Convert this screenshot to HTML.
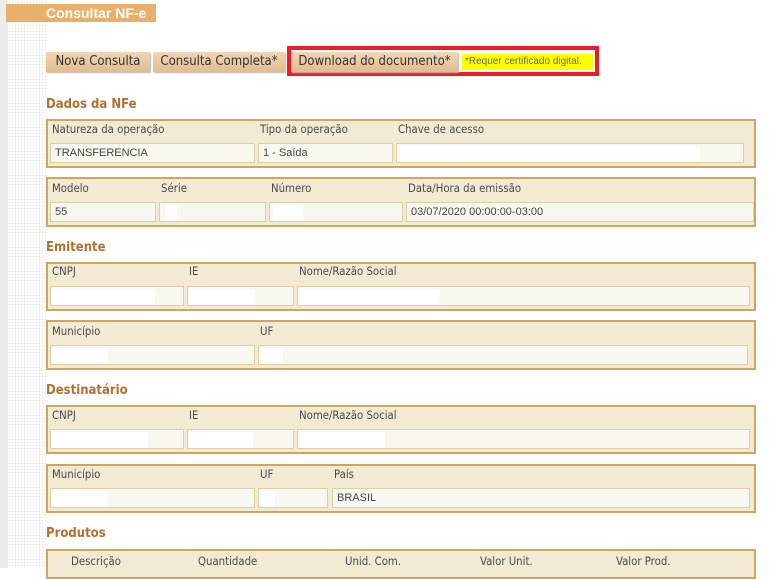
<!DOCTYPE html>
<html><head><meta charset="utf-8"><style>
*{margin:0;padding:0;box-sizing:border-box}
body{width:770px;height:568px;overflow:hidden;background:#fff;font-family:"DejaVu Sans Condensed","Liberation Sans",sans-serif;position:relative}
.strip{position:absolute;left:0;top:0;width:8px;height:568px;background:#ececec}
.dots{position:absolute;left:8px;top:0;width:40px;height:568px;background-image:radial-gradient(#ececec 1px,transparent 1px);background-size:3px 3px;opacity:.9}
.a{position:absolute}
.title{left:6px;top:4px;width:150px;height:18px;background:#e8b06a;color:#fff;font:bold 14px "Liberation Sans",sans-serif;padding-left:40px;line-height:18px}
.btn{top:52px;height:20px;background:linear-gradient(#f0d7b8,#e4bb8c);color:#333;font-size:13px;line-height:20px;text-align:center;box-shadow:1px 1px 1px #bbb;white-space:nowrap}
.red{left:287px;top:46px;width:312px;height:30px;border:4px solid #ee1c24;background:#fff}
.note{left:462px;top:54px;width:131px;height:16px;background:#ffff00;color:#666;font:10px "Liberation Sans",sans-serif;line-height:16px;padding-left:3px}
.h{left:46px;color:#b0702f;font-weight:bold;font-size:13px}
.box{left:46px;width:710px;background:#f2ead3;border:2px solid #cfa560}
.lb{font-size:11.3px;color:#4a4a4a}
.in{height:20px;background:#f9f8f0;border:1px solid #ddd0a8;font:11px "Liberation Sans",sans-serif;color:#444;line-height:18px;padding-left:4px}
.w{position:absolute;background:#fff;height:16px;top:2px}
</style></head><body>
<div class="strip"></div><div class="dots"></div>
<div class="a title">Consultar NF-e</div>
<div class="a btn" style="left:46px;width:104px">Nova Consulta</div>
<div class="a btn" style="left:153px;width:132px">Consulta Completa*</div>
<div class="a red"></div>
<div class="a btn" style="left:291px;width:167px">Download do documento*</div>
<div class="a note">*Requer certificado digital.</div>

<div class="a h" style="top:97px">Dados da NFe</div>
<div class="a box" style="top:119px;height:49px"></div>
<div class="a lb" style="left:52px;top:123px">Natureza da operação</div>
<div class="a lb" style="left:260px;top:123px">Tipo da operação</div>
<div class="a lb" style="left:398px;top:123px">Chave de acesso</div>
<div class="a in" style="left:50px;top:143px;width:205px">TRANSFERENCIA</div>
<div class="a in" style="left:258px;top:143px;width:135px">1 - Saída</div>
<div class="a in" style="left:396px;top:143px;width:348px"><div class="w" style="left:3px;width:300px"></div></div>

<div class="a box" style="top:177px;height:50px"></div>
<div class="a lb" style="left:52px;top:182px">Modelo</div>
<div class="a lb" style="left:161px;top:182px">Série</div>
<div class="a lb" style="left:271px;top:182px">Número</div>
<div class="a lb" style="left:408px;top:182px">Data/Hora da emissão</div>
<div class="a in" style="left:50px;top:202px;width:106px">55</div>
<div class="a in" style="left:159px;top:202px;width:107px"><div class="w" style="left:5px;width:12px"></div></div>
<div class="a in" style="left:269px;top:202px;width:134px"><div class="w" style="left:3px;width:30px"></div></div>
<div class="a in" style="left:406px;top:202px;width:348px">03/07/2020 00:00:00-03:00</div>

<div class="a h" style="top:240px">Emitente</div>
<div class="a box" style="top:262px;height:49px"></div>
<div class="a lb" style="left:52px;top:265px">CNPJ</div>
<div class="a lb" style="left:189px;top:265px">IE</div>
<div class="a lb" style="left:299px;top:265px">Nome/Razão Social</div>
<div class="a in" style="left:50px;top:286px;width:134px"><div class="w" style="left:1px;width:103px"></div></div>
<div class="a in" style="left:187px;top:286px;width:107px"><div class="w" style="left:1px;width:66px"></div></div>
<div class="a in" style="left:297px;top:286px;width:453px"><div class="w" style="left:1px;width:140px"></div></div>

<div class="a box" style="top:320px;height:50px"></div>
<div class="a lb" style="left:52px;top:325px">Município</div>
<div class="a lb" style="left:260px;top:325px">UF</div>
<div class="a in" style="left:50px;top:345px;width:205px"><div class="w" style="left:1px;width:56px"></div></div>
<div class="a in" style="left:258px;top:345px;width:490px"><div class="w" style="left:2px;width:22px"></div></div>

<div class="a h" style="top:383px">Destinatário</div>
<div class="a box" style="top:405px;height:49px"></div>
<div class="a lb" style="left:52px;top:409px">CNPJ</div>
<div class="a lb" style="left:189px;top:409px">IE</div>
<div class="a lb" style="left:299px;top:409px">Nome/Razão Social</div>
<div class="a in" style="left:50px;top:429px;width:134px"><div class="w" style="left:1px;width:96px"></div></div>
<div class="a in" style="left:187px;top:429px;width:107px"><div class="w" style="left:1px;width:64px"></div></div>
<div class="a in" style="left:297px;top:429px;width:453px"><div class="w" style="left:1px;width:86px"></div></div>

<div class="a box" style="top:464px;height:49px"></div>
<div class="a lb" style="left:52px;top:468px">Município</div>
<div class="a lb" style="left:260px;top:468px">UF</div>
<div class="a lb" style="left:334px;top:468px">País</div>
<div class="a in" style="left:50px;top:488px;width:205px"><div class="w" style="left:1px;width:56px"></div></div>
<div class="a in" style="left:258px;top:488px;width:70px"><div class="w" style="left:2px;width:14px"></div></div>
<div class="a in" style="left:332px;top:488px;width:418px">BRASIL</div>

<div class="a h" style="top:526px">Produtos</div>
<div class="a box" style="top:549px;height:30px"></div>
<div class="a lb" style="left:71px;top:555px">Descrição</div>
<div class="a lb" style="left:198px;top:555px">Quantidade</div>
<div class="a lb" style="left:345px;top:555px">Unid. Com.</div>
<div class="a lb" style="left:480px;top:555px">Valor Unit.</div>
<div class="a lb" style="left:616px;top:555px">Valor Prod.</div>
</body></html>
